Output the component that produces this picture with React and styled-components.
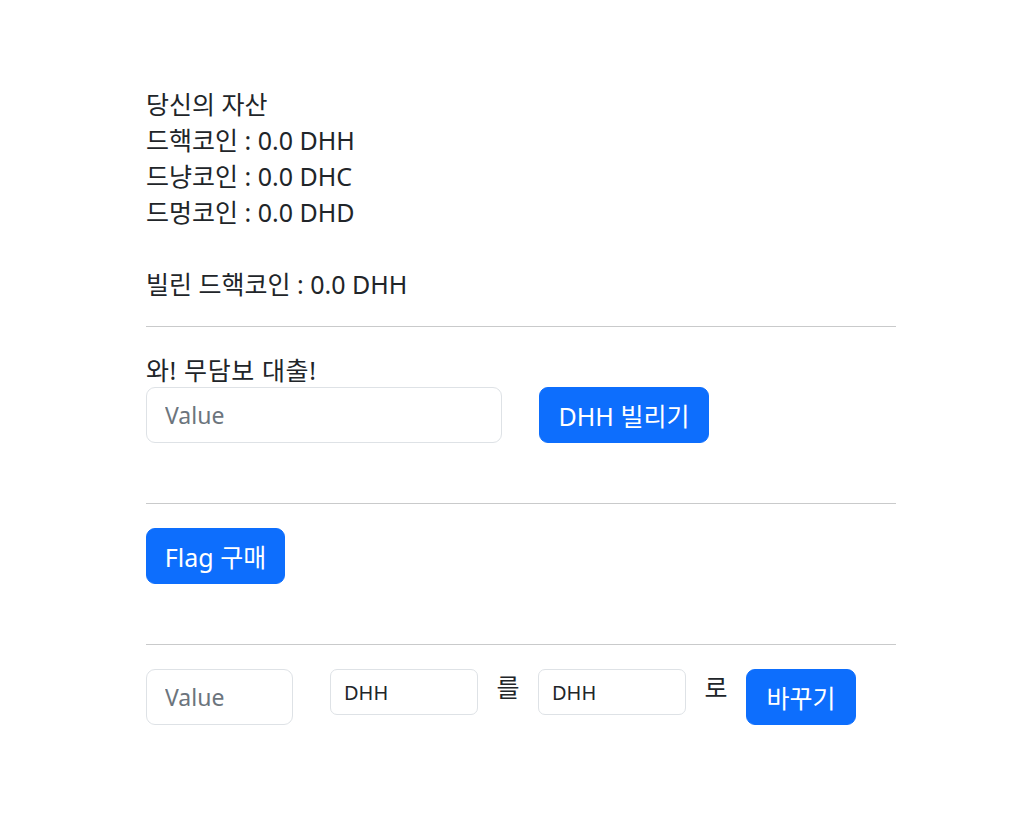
import React, { useState } from "react";
import styled, { createGlobalStyle } from "styled-components";

const GlobalStyle = createGlobalStyle`
  body {
    margin: 0;
    background: #fff;
    color: #212529;
    font-family: "Noto Sans", "Noto Sans CJK KR", sans-serif;
  }
`;

const Page = styled.div`
  width: 750px;
  padding: 86px 0 60px 146px;
`;

const Assets = styled.div`
  font-size: 25px;
  line-height: 36px;
`;

const Line = styled.div`
  min-height: 36px;
`;

const Divider = styled.hr`
  margin: 24px 0;
  border: 0;
  border-top: 1px solid #c9cacb;
`;

const Title = styled.div`
  font-size: 25px;
  line-height: 36px;
  letter-spacing: 0.6px;
  margin-top: 25px;
  margin-bottom: -1px;
`;

const Row = styled.div`
  display: flex;
  align-items: flex-start;
  gap: ${(p) => p.gap || 18}px;
`;

const Input = styled.input`
  box-sizing: border-box;
  width: ${(p) => p.w}px;
  height: ${(p) => (p.big ? 56 : 46)}px;
  padding: ${(p) => (p.big ? "0 18px" : "0 13px")};
  font-family: inherit;
  font-size: ${(p) => (p.big ? 23 : 20)}px;
  color: #212529;
  background: #fff;
  border: 1px solid #dee2e6;
  border-radius: ${(p) => (p.big ? 9 : 7)}px;
  outline: none;
  &::placeholder {
    color: #6c757d;
  }
`;

const Button = styled.button`
  box-sizing: border-box;
  width: ${(p) => p.w}px;
  height: 56px;
  padding: 0;
  font-family: inherit;
  font-size: 25px;
  color: #fff;
  background: #0d6efd;
  border: 1px solid #0d6efd;
  border-radius: 9px;
  cursor: pointer;
`;

const Word = styled.span`
  font-size: 25px;
  line-height: 36px;
  width: 24px;
  text-align: center;
  color: #212529;
`;

const Spacer = styled.div`
  height: 36px;
`;

export default function App() {
  const [amount, setAmount] = useState("");
  const [swap, setSwap] = useState("");
  const [from, setFrom] = useState("DHH");
  const [to, setTo] = useState("DHH");

  return (
    <>
      <GlobalStyle />
      <Page>
        <Assets>
          <Line>당신의 자산</Line>
          <Line>드핵코인 : 0.0 DHH</Line>
          <Line>드냥코인 : 0.0 DHC</Line>
          <Line>드멍코인 : 0.0 DHD</Line>
          <Line />
          <Line>빌린 드핵코인 : 0.0 DHH</Line>
        </Assets>
        <Divider />
        <Title>와! 무담보 대출!</Title>
        <Row gap={37}>
          <Input
            big
            w={356}
            placeholder="Value"
            value={amount}
            onChange={(e) => setAmount(e.target.value)}
          />
          <Button w={170}>DHH 빌리기</Button>
        </Row>
        <Spacer />
        <Divider />
        <Button w={139}>Flag 구매</Button>
        <Spacer />
        <Divider />
        <Row>
          <Input
            big
            w={147}
            placeholder="Value"
            value={swap}
            onChange={(e) => setSwap(e.target.value)}
            style={{ marginRight: 19 }}
          />
          <Input w={148} value={from} onChange={(e) => setFrom(e.target.value)} />
          <Word>를</Word>
          <Input w={148} value={to} onChange={(e) => setTo(e.target.value)} />
          <Word>로</Word>
          <Button w={110}>바꾸기</Button>
        </Row>
      </Page>
    </>
  );
}
